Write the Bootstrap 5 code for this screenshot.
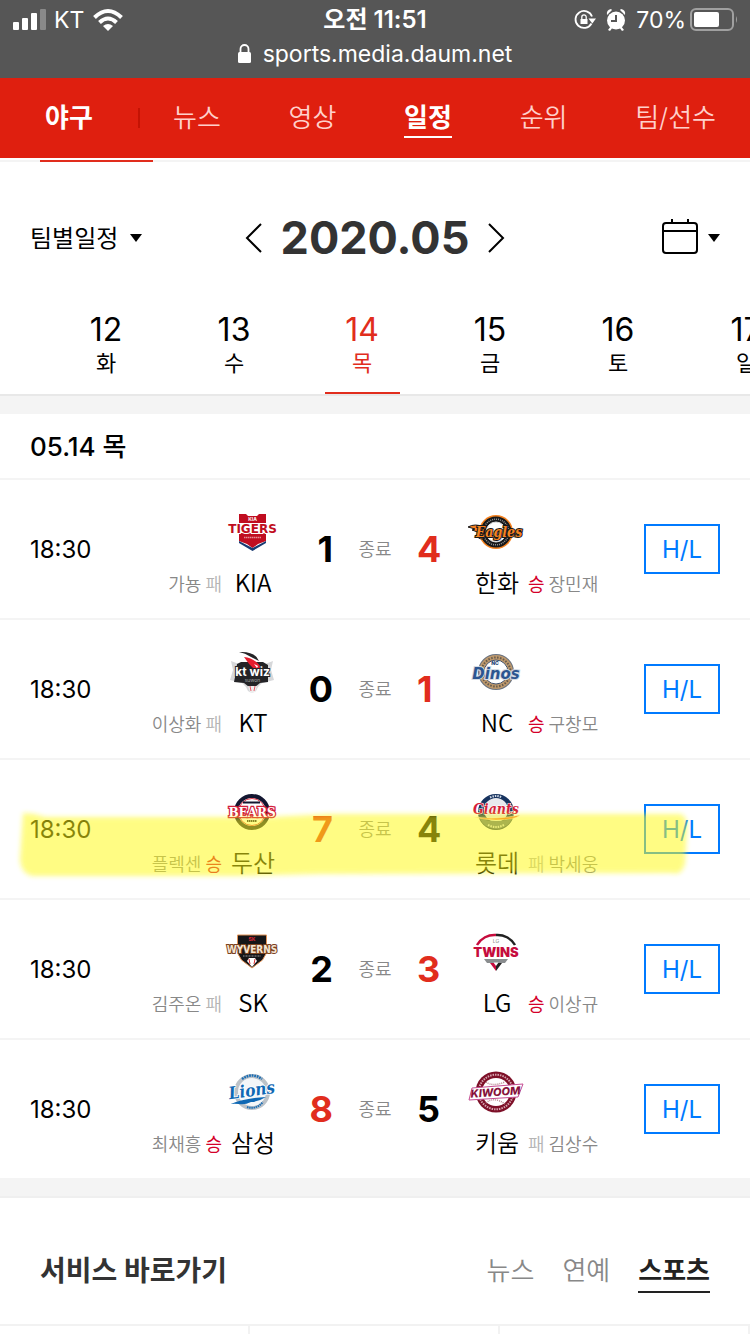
<!DOCTYPE html>
<html lang="ko">
<head>
<meta charset="utf-8">
<meta name="viewport" content="width=device-width, initial-scale=1">
<title>야구 일정</title>
<link href="https://cdn.jsdelivr.net/npm/bootstrap@5.3.0/dist/css/bootstrap.min.css" rel="stylesheet">
<style>
:root{--point:#e12d1d;--line:#f4f4f4}
body{font-family:Inter,"Noto Sans CJK KR",sans-serif;color:#000;background:#fff;overflow-x:hidden}
svg{display:block;flex:none}
a{color:inherit;text-decoration:none}
.phone-top{height:78px;background:#565656;color:#fff;font-size:23px}
.phone-line{height:40px;line-height:40px}
.phone-line>*{flex:1 1 0}
.phone-url{height:28px;line-height:28px}
.clock{font-size:24px;font-weight:600}
.gnb{height:80px;background:#df1f0f;color:#fff;font-size:26px;padding:0 34px 0 45px}
.gnb-sport{width:93px}
.gnb-sport span{font-weight:700}
.gnb-bar{width:2px;height:20px;background:#c41304;margin-right:33px}
.gnb a{line-height:36px}
.gnb-menu{padding-top:2px}
.gnb-menu a{color:#ffd0cb;font-weight:350}
.gnb-menu a.on{color:#fff;font-weight:700;border-bottom:2px solid #fff}
.sub-line{height:2px;background:var(--line);margin-top:2px;padding-left:40px}
.sub-line i{display:block;width:113px;height:2px;background:var(--point)}
.month-bar{display:grid;grid-template-columns:1fr auto 1fr;height:144px;margin-top:4px;padding:0 30px}
.team-pick select{appearance:none;border:0;background:none;padding:2px 0 0;width:100px;font-size:24px;line-height:36px;color:#000}
.month-bar button{border:0;background:none;padding:0}
.cal-btn{gap:10px}
.month-title{font-size:45px;font-weight:700;color:#333;line-height:56px;margin:0;padding:0 19px}
.days{height:86px;padding-left:42px;border-bottom:2px solid #e8e8e8;overflow:hidden}
.days a{flex:0 0 128px}
.days .day-in{width:75px;height:84px;text-align:center}
.days .num{font-size:32px;line-height:40px;display:block}
.days .dow{font-size:22px;line-height:26px;display:block;font-weight:400}
.days .on{color:var(--point);border-bottom:2px solid var(--point)}
.gutter{height:18px;background:#f4f4f4}
.day-head{height:66px;border-bottom:2px solid var(--line);padding:2px 30px 0;font-size:26px;font-weight:500;margin:0}
.game{border-bottom:2px solid var(--line);padding:0 30px;position:relative}
.game:last-child{border-bottom:0}
.g-time,.g-link{width:90px}
.g-time{font-size:24px;padding-top:2px}
.pitcher{flex:1 1 0;font-size:18px;line-height:32px;padding-bottom:17px;gap:4px;color:#888;font-weight:350}
.pitcher .lose{color:#b4b4b4}
.pitcher .win{color:#d4002a;font-weight:400}
.club{width:62px;padding:26px 0 20px;text-align:center;font-family:"Noto Sans CJK KR",sans-serif;font-size:24px;font-weight:350;line-height:32px;white-space:nowrap}
.club svg{width:60px;height:52px;margin-bottom:8px}
.score{width:49px;font-size:36px;font-weight:700;line-height:50px}
.score.won{color:var(--point)}
.state{width:84px;text-align:center;font-size:18px;color:#888;font-weight:350}
.hl{width:76px;height:50px;border:2px solid #007aff;color:#007aff;font-size:24px;line-height:48px;text-align:center}
.marker{position:absolute;left:0;top:40px;width:100%;height:90px;pointer-events:none}
.foot-head{border-top:2px solid #efefef;border-bottom:2px solid #f2f2f2;height:130px;padding:22px 40px 0}
.foot-head h2{font-size:28px;font-weight:700;color:#333;margin:0}
.foot-menu{gap:28px;font-size:26px}
.foot-menu a{color:#888;line-height:40px;font-weight:350;border-bottom:2px solid transparent}
.foot-menu a.on{color:#222;font-weight:700;border-color:#222}
.foot-grid>div{height:8px;border-right:2px solid #f2f2f2}
</style>
</head>
<body>
<header>
  <div class="phone-top">
    <div class="phone-line d-flex px-2">
      <div class="d-flex align-items-center ps-1">
        <svg width="34" height="22" viewBox="0 0 34 22" fill="#fff"><rect x="1" y="13" width="6" height="8" rx="1"/><rect x="10" y="9" width="6" height="12" rx="1"/><rect x="19" y="4" width="6" height="17" rx="1"/><rect x="28" y="0" width="6" height="21" rx="1" opacity=".3"/></svg>
        <span class="ms-2">KT</span>
        <svg class="ms-2" width="32" height="24" viewBox="0 0 32 24" fill="none" stroke="#fff" stroke-width="4"><path d="M2.500 9.500Q16-3.500 29.500 9.500M7.500 14.500Q16 6.500 24.500 14.500"/><path d="M16 23l-5-5q5-4 10 0z" fill="#fff" stroke="none"/></svg>
      </div>
      <div class="clock text-center">오전 11:51</div>
      <div class="d-flex align-items-center justify-content-end pe-1">
        <svg width="22" height="22" viewBox="0 0 22 22" fill="none" stroke="#fff" stroke-width="1.800"><path d="M17.500 14.500A8.500 8.500 0 1 1 18 7.500"/><path d="M14.500 9.500h7.500l-3.700 5z" fill="#fff" stroke="none"/><rect x="6.500" y="10" width="7" height="5" fill="#fff" stroke="none"/><path d="M7.800 10V8a2.200 2.200 0 0 1 4.400 0v2" stroke-width="1.300"/></svg>
        <svg class="mx-2" width="24" height="22" viewBox="0 0 24 22"><g fill="#fff"><circle cx="12" cy="11.500" r="9"/><path d="M3 6q-1-5 4-6l1 1zM21 6q1-5-4-6l-1 1z"/><path d="M4 21l3-4 2 1-3 4zM20 21l-3-4-2 1 3 4z"/></g><path d="M12 6v6H7" fill="none" stroke="#565656" stroke-width="2"/></svg>
        <span>70%</span>
        <svg class="ms-1" width="48" height="24" viewBox="0 0 48 24"><rect x="1" y="1" width="42" height="21" rx="5" fill="none" stroke="#a0a0a0" stroke-width="2"/><rect x="4" y="4" width="25" height="15" rx="2" fill="#fff"/><path d="M46 8q2 3.500 0 7z" fill="#a0a0a0"/></svg>
      </div>
    </div>
    <div class="phone-url d-flex justify-content-center align-items-center">
      <svg width="13" height="20" viewBox="0 0 13 20"><rect y="8" width="13" height="11" rx="1.500" fill="#fff"/><path d="M2.500 9V5a4 4 0 0 1 8 0v4" fill="none" stroke="#fff" stroke-width="1.800"/></svg>
      <span class="ms-2 ps-1">sports.media.daum.net</span>
    </div>
  </div>
  <nav class="gnb d-flex align-items-center">
    <a href="#" class="gnb-sport"><span>야구</span></a>
    <div class="gnb-bar"></div>
    <div class="gnb-menu d-flex flex-fill justify-content-between">
      <a href="#">뉴스</a><a href="#">영상</a><a href="#" class="on">일정</a><a href="#">순위</a><a href="#">팀/선수</a>
    </div>
  </nav>
  <div class="sub-line"><i></i></div>
</header>
<main>
  <div class="month-bar align-items-center">
    <label class="team-pick d-flex align-items-center">
      <select aria-label="팀별일정"><option>팀별일정</option></select>
      <svg width="12" height="8" viewBox="0 0 12 8"><path d="M0 0h12L6 8z"/></svg>
    </label>
    <div class="d-flex align-items-center">
      <button type="button" aria-label="이전 달"><svg width="17" height="30" viewBox="0 0 17 30" fill="none" stroke="#000" stroke-width="2"><path d="M16 1L2 15l14 14"/></svg></button>
      <h1 class="month-title">2020.05</h1>
      <button type="button" aria-label="다음 달"><svg width="17" height="30" viewBox="0 0 17 30" fill="none" stroke="#000" stroke-width="2"><path d="M1 1l14 14L1 29"/></svg></button>
    </div>
    <button type="button" class="cal-btn d-flex align-items-center justify-content-end" aria-label="달력">
      <svg width="36" height="38" viewBox="0 0 36 38" fill="none" stroke="#000" stroke-width="2"><rect x="1" y="4" width="34" height="30" rx="3"/><path d="M1 12h34M10 0v4M26 0v4"/></svg>
      <svg width="12" height="8" viewBox="0 0 12 8"><path d="M0 0h12L6 8z"/></svg>
    </button>
  </div>
  <div class="days d-flex">
    <a href="#" class="d-flex justify-content-center"><span class="day-in"><span class="num">12</span><span class="dow">화</span></span></a>
    <a href="#" class="d-flex justify-content-center"><span class="day-in"><span class="num">13</span><span class="dow">수</span></span></a>
    <a href="#" class="d-flex justify-content-center"><span class="day-in on"><span class="num">14</span><span class="dow">목</span></span></a>
    <a href="#" class="d-flex justify-content-center"><span class="day-in"><span class="num">15</span><span class="dow">금</span></span></a>
    <a href="#" class="d-flex justify-content-center"><span class="day-in"><span class="num">16</span><span class="dow">토</span></span></a>
    <a href="#" class="d-flex justify-content-center"><span class="day-in"><span class="num">17</span><span class="dow">일</span></span></a>
  </div>
  <div class="gutter"></div>
  <h2 class="day-head d-flex align-items-center">05.14 목</h2>
  <ul class="list-unstyled m-0">
    <li class="game d-flex align-items-center">
      <div class="g-time">18:30</div>
      <div class="pitcher d-flex justify-content-end align-self-end"><span>가뇽</span><span class="lose">패</span></div>
      <div class="club">
        <svg viewBox="0 0 60 52"><path d="M17 8h7l2 2h9l2-2h7v9H17z" fill="#c00d20"/><path d="M17 27h27v8l-8 3-5.500 4-5.500-4-8-3z" fill="#c00d20"/><path d="M17 35l13.500 7L44 35v2l-13.500 8L17 37z" fill="#183a72"/><path d="M22 31.500h17" stroke="#e58d96" stroke-width="1.500" stroke-dasharray="1.500 .5"/><text x="30.500" y="14.500" font-family="Inter" font-weight="700" font-size="5" fill="#fff" text-anchor="middle">KIA</text><text x="30.500" y="27" font-family="DejaVu Sans" font-weight="700" font-size="12" fill="#c00d20" stroke="#fff" stroke-width="2" paint-order="stroke" text-anchor="middle">TIGERS</text></svg>
        KIA</div>
      <div class="score text-end">1</div><div class="state">종료</div><div class="score won">4</div>
      <div class="club">
        <svg viewBox="0 0 60 52"><circle cx="30" cy="26" r="17" fill="#f58220"/><circle cx="30" cy="26" r="15.500" fill="#17181a"/><circle cx="30" cy="26" r="10" fill="#fff" stroke="#ddd"/><circle cx="30" cy="26" r="12.800" fill="none" stroke="#999" stroke-width="1.500" stroke-dasharray="1 1"/><path d="M2 21q7-4 16 0l-1 12q-6 0-6-4l3-2-8-3 3-1z" fill="#f58220" stroke="#17181a"/><text x="33" y="31" font-family="DejaVu Serif Condensed, DejaVu Serif" font-style="italic" font-weight="700" font-size="14" fill="#f58220" stroke="#17181a" stroke-width="2" paint-order="stroke" text-anchor="middle">Eagles</text></svg>
        한화</div>
      <div class="pitcher d-flex align-self-end"><span class="win">승</span><span>장민재</span></div>
      <div class="g-link d-flex justify-content-end"><a href="#" class="hl">H/L</a></div>
    </li>
    <li class="game d-flex align-items-center">
      <div class="g-time">18:30</div>
      <div class="pitcher d-flex justify-content-end align-self-end"><span>이상화</span><span class="lose">패</span></div>
      <div class="club">
        <svg viewBox="0 0 60 52"><path d="M9 15l8 3h26l8-3-2 9 3 10-12 3-4 4-2 4q-4 3-8 0l-2-4-4-4-12-3 3-10z" fill="#d7d8da"/><path d="M15 18l4-2h22l5 3v17l-8 1-5 4h-6l-5-4-10-1 2-10z" fill="#242427"/><path d="M17 6q16-1 20 9l-8-4q-6-4-12-5z" fill="#242427"/><path d="M22 11q10 1 16 9l3 3-8 1q-6-5-11-13z" fill="#e51d2e"/><path d="M32 18l4 2-1 2z" fill="#fff"/><path d="M26 40h9l-2 6h-5z" fill="#eee"/><path d="M28 40l1 5M33 40l-1 5" stroke="#e51d2e" stroke-width=".7"/><text x="30.500" y="29.500" font-family="Inter" font-weight="700" font-size="12" fill="#fff" stroke="#242427" stroke-width="2" paint-order="stroke" text-anchor="middle">kt wiz</text><text x="30.500" y="35.500" font-family="Inter" font-size="5" fill="#ccc" text-anchor="middle">suwon</text></svg>
        KT</div>
      <div class="score text-end">0</div><div class="state">종료</div><div class="score won">1</div>
      <div class="club">
        <svg viewBox="0 0 60 52"><circle cx="30" cy="26" r="18" fill="#68717f"/><circle cx="30" cy="26" r="17" fill="#bd986c"/><circle cx="30" cy="26" r="12" fill="#fff" stroke="#44526a"/><circle cx="30" cy="26" r="14.500" fill="none" stroke="#65594b" stroke-width="2" stroke-dasharray="1.500 1.500"/><text x="29" y="19" font-family="Inter" font-weight="800" font-size="5" fill="#173c70" text-anchor="middle">NC</text><text x="30" y="33" font-family="DejaVu Sans" font-style="italic" font-weight="700" font-size="15" fill="#2c5590" stroke="#d3dae3" stroke-width="2" paint-order="stroke" text-anchor="middle">Dinos</text></svg>
        NC</div>
      <div class="pitcher d-flex align-self-end"><span class="win">승</span><span>구창모</span></div>
      <div class="g-link d-flex justify-content-end"><a href="#" class="hl">H/L</a></div>
    </li>
    <li class="game d-flex align-items-center">
      <div class="g-time">18:30</div>
      <div class="pitcher d-flex justify-content-end align-self-end"><span>플렉센</span><span class="win">승</span></div>
      <div class="club">
        <svg viewBox="0 0 60 52"><circle cx="30" cy="26" r="16" fill="#fff" stroke="#131630" stroke-width="4"/><circle cx="30" cy="26" r="13.500" fill="none" stroke="#e33a4c"/><path d="M21 16.500h17" stroke="#131630" stroke-width="2"/><path d="M25 35h10" stroke="#131630" stroke-width="2" stroke-dasharray="1.500 .5"/><text x="30" y="30.500" font-family="DejaVu Serif" font-weight="700" font-size="12" fill="#fff" stroke="#d2203a" stroke-width="2.500" paint-order="stroke" text-anchor="middle">BEARS</text></svg>
        두산</div>
      <div class="score won text-end">7</div><div class="state">종료</div><div class="score">4</div>
      <div class="club">
        <svg viewBox="0 0 60 52"><circle cx="30" cy="26" r="18" fill="#17335f"/><circle cx="30" cy="24" r="12" fill="#e8e9ed"/><path d="M14 33q16 4 32 0-4 9-16 10-12-1-16-10z" fill="#50688f"/><path d="M24 11.500q6-3 12 0M22 39q8 4 16 0" fill="none" stroke="#d2dae6" stroke-width="2" stroke-dasharray="1.500 1"/><path d="M8 31q23 3 46-2-5 5-24 5-12 0-22-3z" fill="#ef5c32" stroke="#fff" stroke-width=".5"/><text x="30" y="28" font-family="DejaVu Serif Condensed, DejaVu Serif" font-style="italic" font-weight="700" font-size="14" fill="#d51d3b" stroke="#fff" stroke-width="1" paint-order="stroke" text-anchor="middle">Giants</text></svg>
        롯데</div>
      <div class="pitcher d-flex align-self-end"><span class="lose">패</span><span>박세웅</span></div>
      <div class="g-link d-flex justify-content-end"><a href="#" class="hl">H/L</a></div>
      <svg class="marker" viewBox="0 0 750 90" preserveAspectRatio="none"><defs><filter id="soft" x="-5%" y="-20%" width="110%" height="140%"><feGaussianBlur stdDeviation="2.500"/></filter></defs><path d="M23 13L34 14 45 17 270 17 330 14H681Q687 17 687 27L685 64Q681 76 673 73L320 74 240 76H32Q21 73 20 60z" fill="#fffa14" opacity=".53" filter="url(#soft)"/></svg>
    </li>
    <li class="game d-flex align-items-center">
      <div class="g-time">18:30</div>
      <div class="pitcher d-flex justify-content-end align-self-end"><span>김주온</span><span class="lose">패</span></div>
      <div class="club">
        <svg viewBox="0 0 60 52"><path d="M15.500 9h29v18l-4 7-10.500 8-10.500-8-4-7z" fill="#151518" stroke="#e09256"/><path d="M25 35l2-3h6l2 3-5 6z" fill="#fff"/><path d="M27 33l1 5M33 33l-1 5" stroke="#d33"/><path d="M21 30h18" stroke="#999" stroke-dasharray="1 .5"/><text x="30" y="15" font-family="Inter" font-weight="700" font-size="5" fill="#e42837" text-anchor="middle">SK</text><text x="30" y="27" font-family="DejaVu Sans Condensed" font-weight="700" font-size="10" fill="#f4e6d5" stroke="#7c421f" stroke-width="2" paint-order="stroke" text-anchor="middle">WYVERNS</text></svg>
        SK</div>
      <div class="score text-end">2</div><div class="state">종료</div><div class="score won">3</div>
      <div class="club">
        <svg viewBox="0 0 60 52"><path d="M11 19A20 20 0 0 1 30 9" fill="none" stroke="#c60c3d" stroke-width="2.500"/><path d="M30 9a20 20 0 0 1 19 10" fill="none" stroke="#222" stroke-width="2.500"/><path d="M18 33h24l-3 4H21z" fill="#8a8d8f"/><path d="M24 37l6 8V37z" fill="#c60c3d"/><path d="M30 45l6-8h-6z" fill="#222"/><path d="M27.500 36.500h5L30 40z" fill="#fff"/><text x="30" y="17" font-family="Inter" font-size="5" fill="#555" text-anchor="middle">LG</text><text x="30" y="31" font-family="Inter" font-weight="900" font-size="13" fill="#c60c3d" text-anchor="middle">TWINS</text></svg>
        LG</div>
      <div class="pitcher d-flex align-self-end"><span class="win">승</span><span>이상규</span></div>
      <div class="g-link d-flex justify-content-end"><a href="#" class="hl">H/L</a></div>
    </li>
    <li class="game d-flex align-items-center">
      <div class="g-time">18:30</div>
      <div class="pitcher d-flex justify-content-end align-self-end"><span>최채흥</span><span class="win">승</span></div>
      <div class="club">
        <svg viewBox="0 0 60 52"><circle cx="30" cy="26" r="16" fill="#f4f6f8" stroke="#bcc2c8" stroke-width="4"/><path d="M20 13q10-7 20 0" fill="none" stroke="#1a6db4" stroke-width="2.500" stroke-dasharray="1.800 .8"/><path d="M25 41q9 3 16-5" fill="none" stroke="#1a6db4" stroke-width="2" stroke-dasharray="1.500 .7"/><path d="M6 39q16-7 38-8-8 5-15 5-6 3-12 2-8-1-11 1z" fill="#0f68b4"/><text x="30" y="30" font-family="DejaVu Serif Condensed, DejaVu Serif" font-style="italic" font-weight="700" font-size="17" fill="#0f68b4" stroke="#fff" stroke-width="1.500" paint-order="stroke" text-anchor="middle" transform="rotate(-8 30 26)">Lions</text></svg>
        삼성</div>
      <div class="score won text-end">8</div><div class="state">종료</div><div class="score">5</div>
      <div class="club">
        <svg viewBox="0 0 60 52"><circle cx="30" cy="26" r="20.500" fill="#7d1028"/><circle cx="30" cy="26" r="14" fill="#fff"/><circle cx="30" cy="26" r="17.300" fill="none" stroke="#d6a4af" stroke-width="2" stroke-dasharray="1.500 1"/><path d="M20 16q6 5 19 0M20 37q8-7 19 1" fill="none" stroke="#b98a92" stroke-width="1.500" stroke-dasharray="1 1"/><path d="M6 22L57 18 52 31 3 34z" fill="#fff" stroke="#c54d93"/><text x="29.500" y="30" font-family="Inter" font-style="italic" font-weight="800" font-size="11" fill="#86123b" text-anchor="middle" transform="rotate(-4 30 26)">KIWOOM</text></svg>
        키움</div>
      <div class="pitcher d-flex align-self-end"><span class="lose">패</span><span>김상수</span></div>
      <div class="g-link d-flex justify-content-end"><a href="#" class="hl">H/L</a></div>
    </li>
  </ul>
  <div class="gutter"></div>
</main>
<footer>
  <div class="foot-head d-flex align-items-center justify-content-between">
    <h2>서비스 바로가기</h2>
    <div class="foot-menu d-flex"><a href="#">뉴스</a><a href="#">연예</a><a href="#" class="on">스포츠</a></div>
  </div>
  <div class="foot-grid row row-cols-3 g-0"><div class="col"></div><div class="col"></div><div class="col"></div></div>
</footer>
<script src="https://cdn.jsdelivr.net/npm/bootstrap@5.3.0/dist/js/bootstrap.bundle.min.js"></script>
</body>
</html>
